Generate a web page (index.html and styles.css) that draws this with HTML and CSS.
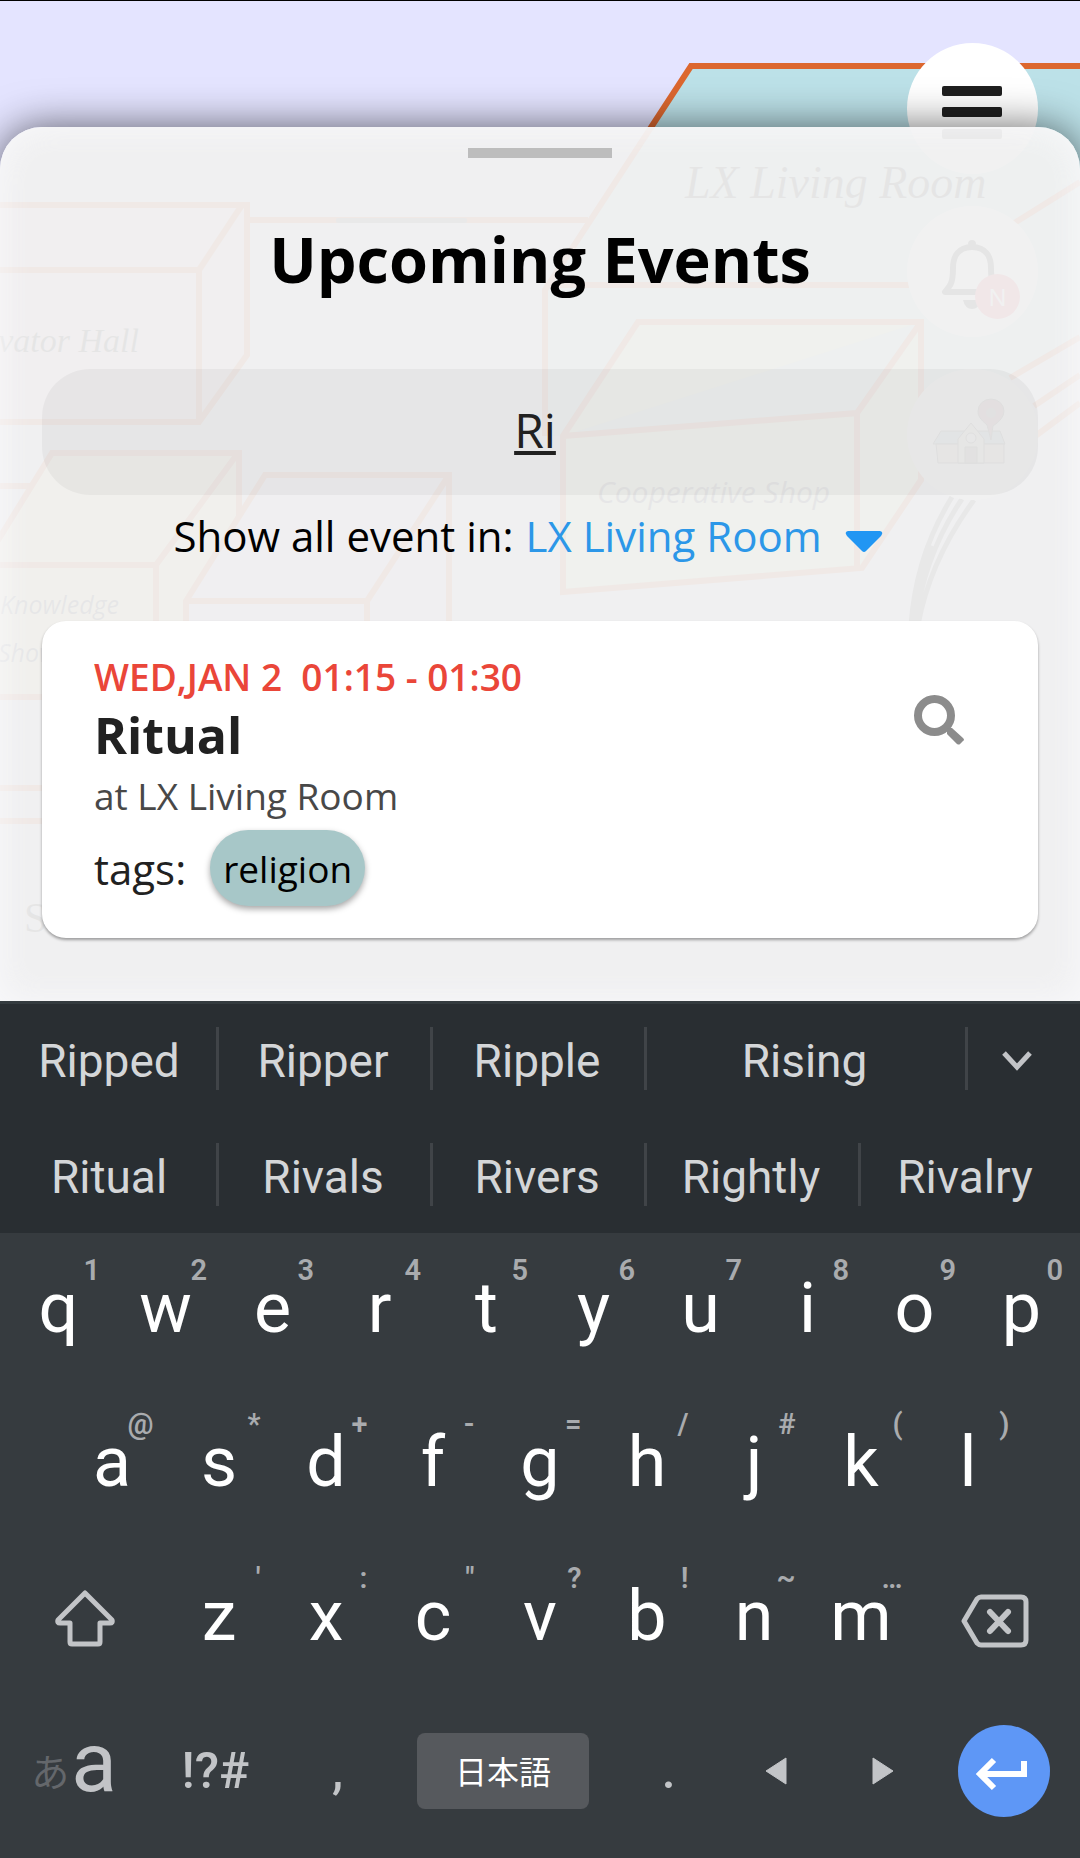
FILE: index.html
```html
<!DOCTYPE html>
<html lang="en">
<head>
<meta charset="utf-8">
<meta name="viewport" content="width=device-width, initial-scale=1">
<title>Upcoming Events</title>
<link rel="stylesheet" href="styles.css">
</head>
<body>
<div class="app">
  <main class="screen">
    <svg class="map" viewBox="0 0 1080 1001" preserveAspectRatio="xMaxYMin slice" aria-hidden="true">
      <g class="map-lines">
        <path fill="#bce1e8" stroke="none" d="M691 66H1080V338L1010 380L921 436H545V285L588 219Z"/>
        <path d="M1090 66H691L545 290V436M545 285H1000M250 220H588M1080 182L1000 232M1080 337L1010 378M1080 375L1034 406M1080 403L1034 437"/>
        <path fill="#f0cedc" d="M-5 205H247V355L199 422H-5ZM-5 270H199V422M199 270L242 205"/>
        <path fill="#f6ecb0" d="M-5 545L52 453H239V580L156 697H-5ZM-5 565H156V697M156 565L238 453M-5 486H32"/>
        <path fill="#e8d0f8" d="M265 475H449V700H186V601ZM186 601H367V700M367 601L449 475"/>
        <path fill="#dcf0b8" d="M638 322H921V480L862 568L563 592V436ZM563 436L857 413L921 322M857 413V568"/>
        <path d="M-5 788H60M-5 821H60"/>
      </g>
      <rect x="336" y="218" width="131" height="5" rx="2" fill="#666"/>
      <g fill="none" stroke="#555" stroke-width="5">
        <path d="M952 497Q916 555 911 625M962 499Q924 555 915 625M974 500Q930 560 918 625"/>
        <path stroke-width="8" d="M930 545Q918 580 913 625"/>
      </g>
      <g class="map-serif">
        <text x="685" y="198" font-size="46">LX Living Room</text>
        <text x="139" y="352" font-size="34" text-anchor="end">Elevator Hall</text>
        <text class="map-upright" x="24" y="932" font-size="42">S</text>
      </g>
      <g class="map-sans">
        <text x="597" y="503" font-size="30">Cooperative Shop</text>
        <text x="0" y="614" font-size="25">Knowledge</text>
        <text x="-2" y="662" font-size="25">Show</text>
      </g>
    </svg>

    <nav class="fabs" aria-label="Map tools">
      <button class="fab" type="button" aria-label="Menu">
        <svg viewBox="0 0 131 131"><g fill="#1f1f1f"><rect x="35" y="43" width="60" height="10" rx="2"/><rect x="35" y="64" width="60" height="10" rx="2"/><rect x="35" y="86" width="60" height="10" rx="2"/></g></svg>
      </button>
      <button class="fab" type="button" aria-label="Notifications">
        <svg viewBox="0 0 131 131"><path fill="none" stroke="#222" stroke-width="6" stroke-linejoin="round" d="M65 41C51 41 46 51 46 62C46 76 44 79 38 86H92C86 79 84 76 84 62C84 51 79 41 65 41Z"/><circle cx="65" cy="38" r="4" fill="#222"/><path fill="#222" d="M56 94H74Q72 103 65 103Q58 103 56 94Z"/></svg>
        <span class="badge">N</span>
      </button>
      <button class="fab" type="button" aria-label="Campus map">
        <svg viewBox="0 0 131 131"><g stroke="#555" stroke-width="1"><path fill="#9cc2ce" d="M34 62H93L98 75H26Z"/><path fill="#ddd0c0" d="M29 75H97V94H31Z"/><path fill="#e4dcd0" d="M51 94V70L64 54L77 70V94Z"/><circle cx="64" cy="69" r="5" fill="#fff"/><path fill="#a39080" d="M58 94V78H70V94Z"/><path fill="#a56a70" d="M84 71L80 56Q70 48 71 42A13 12 0 0 1 97 42Q97 50 86 57Z"/></g><circle cx="84" cy="44" r="5" fill="#888"/></svg>
      </button>
    </nav>

    <section class="sheet" aria-labelledby="sheet-title">
      <div class="handle"></div>
      <h1 class="title" id="sheet-title">Upcoming Events</h1>
      <input class="search" type="text" value="Ri" aria-label="Search events" spellcheck="false">
      <div class="filter">
        <label for="place">Show all event in:</label>
        <span class="picker">
          <select id="place" class="place"><option>LX Living Room</option></select>
          <svg class="caret" viewBox="0 0 38 22" aria-hidden="true"><path fill="#2196f3" d="M3 0H35Q39 1 36 5L21 20Q19 22 17 20L2 5Q-1 1 3 0Z"/></svg>
        </span>
      </div>
      <article class="card">
        <div class="details">
          <p class="time">WED,JAN 2&nbsp; 01:15 - 01:30</p>
          <h2 class="name">Ritual</h2>
          <p class="where">at LX Living Room</p>
          <div class="tags"><span>tags:</span><button class="tag" type="button">religion</button></div>
        </div>
        <button class="find" type="button" aria-label="Find on map">
          <svg viewBox="0 0 50 50"><circle cx="20.500" cy="20.500" r="16.500" fill="none" stroke="#8c8c8c" stroke-width="8"/><path fill="#8c8c8c" d="M33 36Q32 33 35 33H38L49 43Q51 45 49 46L46 49Q45 50 43 49L33 39Z"/></svg>
        </button>
      </article>
    </section>
  </main>

  <section class="keyboard" aria-label="Keyboard">
    <div class="suggestions">
      <div class="words"><button type="button">Ripped</button><button type="button">Ripper</button><button type="button">Ripple</button><button type="button" class="wide">Rising</button><button type="button" class="more" aria-label="More suggestions"><svg viewBox="0 0 30 20"><path fill="none" stroke="#c2c4c7" stroke-width="5" d="M2 2L15 16L28 2"/></svg></button></div>
      <div class="words"><button type="button">Ritual</button><button type="button">Rivals</button><button type="button">Rivers</button><button type="button">Rightly</button><button type="button">Rivalry</button></div>
    </div>
    <div class="keys">
      <div class="row">
        <button type="button" class="key">q<span class="hint">1</span></button><button type="button" class="key">w<span class="hint">2</span></button><button type="button" class="key">e<span class="hint">3</span></button><button type="button" class="key">r<span class="hint">4</span></button><button type="button" class="key">t<span class="hint">5</span></button><button type="button" class="key">y<span class="hint">6</span></button><button type="button" class="key">u<span class="hint">7</span></button><button type="button" class="key">i<span class="hint">8</span></button><button type="button" class="key">o<span class="hint">9</span></button><button type="button" class="key">p<span class="hint">0</span></button>
      </div>
      <div class="row inset">
        <button type="button" class="key">a<span class="hint">@</span></button><button type="button" class="key">s<span class="hint">*</span></button><button type="button" class="key">d<span class="hint">+</span></button><button type="button" class="key">f<span class="hint">-</span></button><button type="button" class="key">g<span class="hint">=</span></button><button type="button" class="key">h<span class="hint">/</span></button><button type="button" class="key">j<span class="hint">#</span></button><button type="button" class="key">k<span class="hint">(</span></button><button type="button" class="key">l<span class="hint">)</span></button>
      </div>
      <div class="row">
        <button type="button" class="side" aria-label="Shift"><svg width="60" height="60" viewBox="0 0 60 60"><path fill="none" stroke="#c2c4c7" stroke-width="5" stroke-linejoin="round" d="M30 5L57 32Q58 35 55 35H45V54Q45 56 43 56H17Q15 56 15 54V35H5Q2 35 3 32Z"/></svg></button>
        <button type="button" class="key">z<span class="hint">'</span></button><button type="button" class="key">x<span class="hint">:</span></button><button type="button" class="key">c<span class="hint">"</span></button><button type="button" class="key">v<span class="hint">?</span></button><button type="button" class="key">b<span class="hint">!</span></button><button type="button" class="key">n<span class="hint">~</span></button><button type="button" class="key">m<span class="hint">…</span></button>
        <button type="button" class="side" aria-label="Backspace"><svg width="68" height="60" viewBox="0 -6 68 60"><g fill="none" stroke="#c2c4c7" stroke-width="5"><path stroke-linejoin="round" d="M20 3H60Q65 3 65 8V46Q65 51 60 51H20Q18 51 16 49L3 27L16 5Q18 3 20 3Z"/><path stroke-width="6" stroke-linecap="round" d="M29 18L47 37M47 18L29 37"/></g></svg></button>
      </div>
      <div class="row bottom">
        <button type="button" class="mode" aria-label="Switch language"><span class="kana">あ</span><span class="latin">a</span></button>
        <button type="button" class="symbol">!?#</button>
        <button type="button" class="symbol">,</button>
        <button type="button" class="space">日本語</button>
        <button type="button" class="symbol">.</button>
        <button type="button" aria-label="Cursor left"><svg width="22" height="28" viewBox="0 0 22 28"><path fill="#c2c4c7" stroke="#c2c4c7" stroke-width="1" stroke-linejoin="round" d="M21 1V27L1 14Z"/></svg></button>
        <button type="button" aria-label="Cursor right"><svg width="22" height="28" viewBox="0 0 22 28"><path fill="#c2c4c7" stroke="#c2c4c7" stroke-width="1" stroke-linejoin="round" d="M1 1V27L21 14Z"/></svg></button>
        <button type="button" class="enter" aria-label="Enter"><svg viewBox="0 0 92 92"><circle cx="46" cy="46" r="46" fill="#5e97f6"/><path fill="none" stroke="#fff" stroke-width="6" d="M66 36V49H24M36 35L22 49L36 63"/></svg></button>
      </div>
    </div>
  </section>
</div>
</body>
</html>
```
FILE: styles.css
```css
* {
  box-sizing: border-box;
}

body {
  margin: 0;
  font-family: "Open Sans", sans-serif;
  color: #212121;
}

h1, h2, p {
  margin: 0;
}

button {
  padding: 0;
  border: 0;
  background: none;
  color: inherit;
  font: inherit;
}

svg {
  display: block;
}

.app {
  display: flex;
  flex-direction: column;
  min-height: 100vh;
}

/* Map with the events sheet on top */
.screen {
  position: relative;
  flex: 1;
  display: flex;
  padding-top: 127px;
  overflow: hidden;
  background: #e4e4ff;
}

.screen::before {
  content: "";
  position: absolute;
  top: 0;
  left: 0;
  right: 0;
  height: 1px;
  background: #000;
}

.map {
  position: absolute;
  top: 0;
  left: 0;
  width: 100%;
  height: 100%;
}

.map-lines {
  fill: none;
  stroke: #dc672f;
  stroke-width: 6px;
}

.map-serif {
  fill: #222;
  font-family: "Liberation Serif", serif;
  font-style: italic;
}

.map-upright {
  font-style: normal;
}

.map-sans {
  fill: #334;
  font-family: "Open Sans", sans-serif;
  font-style: italic;
}

.fabs {
  position: absolute;
  top: 43px;
  right: 42px;
  display: flex;
  flex-direction: column;
  gap: 32px;
}

.fab {
  position: relative;
  width: 131px;
  height: 131px;
  border-radius: 50%;
  background: #fff;
}

.badge {
  position: absolute;
  right: 18px;
  bottom: 18px;
  width: 45px;
  height: 45px;
  border-radius: 50%;
  background: #f0405a;
  color: #fff;
  font-size: 24px;
  line-height: 45px;
}

.sheet {
  position: relative;
  flex: 1;
  min-width: 0;
  display: flex;
  flex-direction: column;
  padding: 21px 42px 62px;
  border-radius: 42px 42px 0 0;
  background: rgba(240, 240, 240, 0.95);
  box-shadow: 0 0 42px rgba(0, 0, 0, 0.6), inset 0 0 36px rgba(252, 252, 255, 0.75);
}

.handle {
  align-self: center;
  width: 144px;
  height: 10px;
  margin-bottom: 57px;
  background: #bdbdbd;
}

.title {
  margin-bottom: 66px;
  color: #000;
  font-size: 63px;
  line-height: 88px;
  font-weight: 700;
  text-align: center;
}

.search {
  width: 100%;
  height: 126px;
  padding: 0 36px 6px 26px;
  border: 0;
  border-radius: 48px;
  outline: 0;
  background: rgba(0, 0, 0, 0.04);
  color: #212121;
  font: inherit;
  font-size: 48px;
  text-align: center;
  text-decoration: underline;
}

.filter {
  display: flex;
  justify-content: center;
  gap: 12px;
  margin: 13px 0 57px;
  padding-right: 24px;
  color: #000;
  font-size: 42px;
  line-height: 56px;
}

.picker {
  position: relative;
}

.place {
  height: 56px;
  padding: 0 60px 0 0;
  border: 0;
  appearance: none;
  background: none;
  color: #2c97e8;
  font: inherit;
}

.caret {
  position: absolute;
  right: 0;
  top: 23px;
  width: 38px;
  height: 22px;
  pointer-events: none;
}

.card {
  display: flex;
  justify-content: space-between;
  align-items: flex-start;
  padding: 33px 74px 32px 52px;
  border-radius: 24px;
  background: #fff;
  box-shadow: 0 2px 3px rgba(0, 0, 0, 0.35);
}

.time {
  color: #ea4639;
  font-size: 37px;
  line-height: 46px;
  font-weight: 600;
}

.name {
  font-size: 50px;
  line-height: 70px;
  font-weight: 700;
}

.where {
  color: #484848;
  font-size: 37px;
  line-height: 52px;
}

.tags {
  display: flex;
  align-items: center;
  gap: 24px;
  margin-top: 8px;
  font-size: 42px;
}

.tag {
  height: 76px;
  padding: 0 13px;
  border-radius: 38px;
  background: #a7c7c8;
  box-shadow: 0 3px 6px rgba(0, 0, 0, 0.35);
  color: #000;
  font-size: 37px;
}

.find {
  width: 50px;
  height: 50px;
  margin-top: 41px;
}

/* On-screen keyboard */
.keyboard {
  background: #363b3f;
  font-family: Roboto, "Noto Sans CJK JP", sans-serif;
}

.suggestions {
  padding: 0 8px 0 2px;
  border-top: 3px solid #343b3f;
  background: #292e32;
}

.words {
  display: grid;
  grid-template-columns: repeat(10, 1fr);
  height: 113px;
}

.words + .words {
  margin-top: 3px;
}

.words button {
  position: relative;
  grid-column: span 2;
  color: #d4d6d8;
  font-size: 46px;
}

.words .wide {
  grid-column: span 3;
}

.words .more {
  grid-column: span 1;
  padding-right: 4px;
}

.more svg {
  width: 30px;
  height: 20px;
  margin: 0 auto;
}

.words button + button::before {
  content: "";
  position: absolute;
  left: 0;
  top: calc(50% - 34px);
  width: 3px;
  height: 63px;
  background: #404448;
}

.keys {
  padding: 0 5px 11px;
}

.row {
  display: flex;
  height: 154px;
}

.row.inset {
  padding: 0 5%;
}

.key {
  position: relative;
  display: flex;
  flex: 2;
  justify-content: center;
  align-items: flex-start;
  padding-top: 34px;
  color: #fff;
  font-size: 70px;
  line-height: 82px;
}

.hint {
  position: absolute;
  top: 19px;
  right: 12px;
  color: #a9abae;
  font-size: 29px;
  line-height: 36px;
  font-weight: 600;
}

.side {
  display: flex;
  flex: 3;
  justify-content: center;
  align-items: center;
}

.row.bottom {
  display: grid;
  grid-template-columns: 138fr 144fr 100fr 230fr 101fr 114fr 99fr 142fr;
  align-items: center;
  justify-items: center;
  height: 152px;
  color: #c2c4c7;
}

.mode {
  display: flex;
  align-items: center;
  gap: 2px;
  padding-bottom: 18px;
}

.kana {
  padding-top: 14px;
  color: #64676b;
  font-size: 38px;
}

.latin {
  font-size: 84px;
}

.symbol {
  font-size: 50px;
  font-weight: 500;
}

.space {
  width: 75%;
  height: 76px;
  padding-bottom: 2px;
  border-radius: 8px;
  background: #56595d;
  color: #fff;
  font-size: 32px;
}

.enter {
  width: 92px;
  height: 92px;
}
```
